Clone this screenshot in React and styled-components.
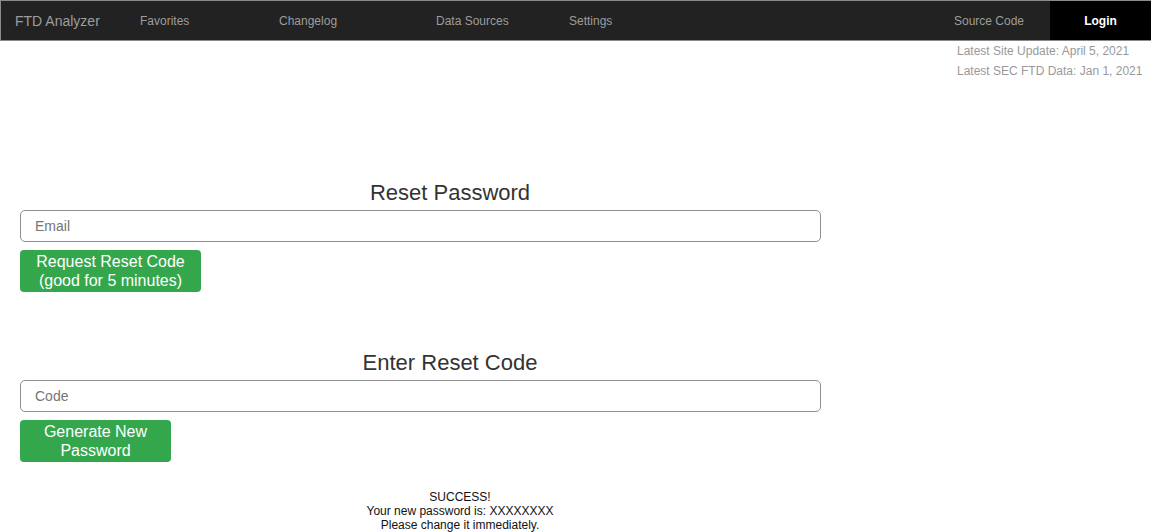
import React from 'react'
import styled, { createGlobalStyle } from 'styled-components';

const GlobalStyle = createGlobalStyle`
body {
  margin: 0;
  font-family: "Liberation Sans", Arial, sans-serif;
  background: #fff;
}
`;

const Nav = styled.nav`
display: flex;
align-items: stretch;
height: 39px;
background-color: #222;
border: 1px solid #8a8a8a;
border-right: none;
`;

const Brand = styled.div`
display: flex;
align-items: center;
width: 125px;
padding-left: 14px;
font-size: 14px;
color: #9d9d9d;
`;

const NavItem = styled.div`
display: flex;
align-items: center;
justify-content: ${({ center }) => (center ? 'center' : 'flex-start')};
width: ${({ w }) => w}px;
font-size: 12px;
color: ${({ active }) => (active ? '#fff' : '#9d9d9d')};
font-weight: ${({ active }) => (active ? 700 : 400)};
background-color: ${({ active }) => (active ? '#000' : 'transparent')};
`;

const Spacer = styled.div`
flex: 1;
`;

const InfoRow = styled.div`
display: flex;
justify-content: flex-end;
`;

const Info = styled.div`
width: 194px;
font-size: 12px;
line-height: 20px;
color: #999;
`;

const Main = styled.div`
width: 900px;
padding-top: 99px;
`;

const Section = styled.section`
display: flex;
flex-direction: column;
align-items: flex-start;
margin-bottom: ${({ mb }) => mb}px;
`;

const Heading = styled.h2`
align-self: stretch;
margin: 0 0 5px;
text-align: center;
font-size: 22px;
line-height: 25px;
font-weight: 400;
color: #333;
`;

const Input = styled.input`
box-sizing: border-box;
width: 801px;
height: 32px;
margin-left: 20px;
padding: 0 14px;
border: 1px solid #8f8f8f;
border-radius: 5px;
font-family: inherit;
font-size: 14px;
outline: none;
&::placeholder {
  color: #757575;
}
`;

const Button = styled.button`
box-sizing: border-box;
width: ${({ w }) => w}px;
margin: 8px 0 0 20px;
padding: 2px 0;
border: none;
border-radius: 4px;
background-color: #34a74c;
color: #fff;
font-family: inherit;
font-size: 16px;
line-height: 19px;
cursor: pointer;
`;

const Success = styled.div`
width: 920px;
text-align: center;
font-size: 12px;
line-height: 14px;
color: #111;
`;

const navLinks = [
  { label: 'Favorites', w: 139 },
  { label: 'Changelog', w: 157 },
  { label: 'Data Sources', w: 133 },
  { label: 'Settings', w: 100 },
];

const App = () => {
  return (
    <>
      <GlobalStyle />
      <Nav>
        <Brand>FTD Analyzer</Brand>
        {navLinks.map(l => (
          <NavItem key={l.label} w={l.w}>{l.label}</NavItem>
        ))}
        <Spacer />
        <NavItem w={122} center>Source Code</NavItem>
        <NavItem w={101} center active>Login</NavItem>
      </Nav>
      <InfoRow>
        <Info>
          <div>Latest Site Update: April 5, 2021</div>
          <div>Latest SEC FTD Data: Jan 1, 2021</div>
        </Info>
      </InfoRow>
      <Main>
        <Section mb={58}>
          <Heading>Reset Password</Heading>
          <Input placeholder="Email" />
          <Button w={181}>Request Reset Code<br />(good for 5 minutes)</Button>
        </Section>
        <Section mb={28}>
          <Heading>Enter Reset Code</Heading>
          <Input placeholder="Code" />
          <Button w={151}>Generate New<br />Password</Button>
        </Section>
      </Main>
      <Success>
        SUCCESS!<br />
        Your new password is: XXXXXXXX<br />
        Please change it immediately.
      </Success>
    </>
  )
}

export default App
